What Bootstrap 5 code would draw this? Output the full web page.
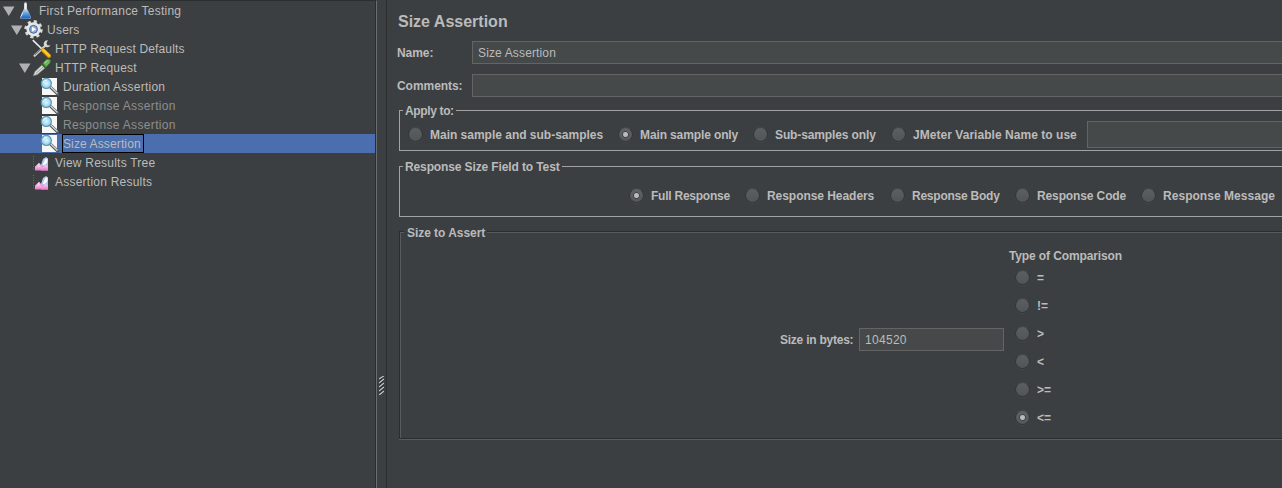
<!DOCTYPE html>
<html lang="en">
<head>
<meta charset="utf-8">
<title>Size Assertion</title>
<link href="https://cdn.jsdelivr.net/npm/bootstrap@5.3.0/dist/css/bootstrap.min.css" rel="stylesheet">
<script src="https://cdn.jsdelivr.net/npm/bootstrap@5.3.0/dist/js/bootstrap.bundle.min.js"></script>
<style>
body{background:#3c3f41;color:#bbb;font:12px/15px "Liberation Sans",Arial,sans-serif;height:488px;white-space:nowrap}
.tree-pane{width:377px;border-top:1px solid #2b2d2e;border-right:1px solid #6b6e70;box-shadow:inset -1px 0 #2b2d2e;letter-spacing:.23px}
.tree-row{height:19px;padding-left:2px}
.lv1{padding-left:10px}.lv2{padding-left:18px}.lv3{padding-left:26px}
.tw{width:14px;height:19px}
.ic{width:20px;height:19px;overflow:visible}
.tree-label{margin-left:2px;height:19px;line-height:19px;border:1px solid transparent;padding-right:2px}
.off{color:#8e8e8e;letter-spacing:.34px}
.chosen{background:#4b6eaf;margin-right:1px;letter-spacing:.12px}
.chosen .tree-label{border-color:#000}
.divider{width:10px;border-right:1px solid #2b2d2e;padding:376px 0 0 2px}
.editor{font-weight:700;padding-left:10px;letter-spacing:-.05px}
.editor h1{font-size:16px;line-height:20px;font-weight:700;margin:12px 0 9px 1px;letter-spacing:0}
.line-row{height:23px;margin-right:-10px}
.line-row>label{width:75px;padding-top:2px}
.field{background:#45494a;border:1px solid #646464;border-radius:0;color:#bbb;font:12px/15px "Liberation Sans",Arial,sans-serif;letter-spacing:.14px;height:23px;padding:0 5px;outline:0}
.group{border:1px solid #a0a2a3;margin:0 -10px 0 2px;padding:0;min-width:0}
.group>legend{float:none;width:auto;font-size:12px;line-height:17px;height:15px;font-weight:700;margin:0 0 0 3px;padding:0 2px}
.g1{height:48px;margin-top:6px}
.g2{height:58px;margin-top:8px}
.g3{height:215px;margin-top:7px;border-color:#2b2d2e;box-shadow:inset 1px 1px #585b5d,0 1px #585b5d}
.g3>legend{margin-left:4px;padding:0 2px 0 3px;line-height:19px;background:#3c3f41}
.opts1{display:grid;grid-template-columns:210px 135px 138px 196px 300px;padding-left:8px;height:32px}
.opts1 .radio-item{margin-top:2px}
.opts2{display:grid;grid-template-columns:116px 145px 125px 126px 140px;padding-left:229px;margin-top:14px}
.radio-item{display:flex;align-items:center;height:16px}
.radio-item input{appearance:none;width:15px;height:15px;margin:0 7px 1px 0;border-radius:50%;flex:none;border:1px solid #35383a;border-top-color:#45484a;background:linear-gradient(#5c5f61,#525557);box-shadow:0 1px 0 #45484a}
.radio-item input:checked{background:radial-gradient(circle at 50% 50%,#bbb 0 2px,#404345 3px,transparent 3.5px),linear-gradient(#5f6264,#55585a)}
.tight1{letter-spacing:-.12px!important}
.tight2{letter-spacing:-.24px!important}
.tight3{letter-spacing:-.36px!important}
.loose{letter-spacing:.04px}
.size-label{margin:94px 6px 0 380px;width:73px}
.size-field{width:145px;margin-top:89px}
.cmp{margin-left:5px;padding-top:10px}
.cmp .radio-item{margin:0 0 12px 6px}
.cmp .radio-item:first-of-type{margin-top:6px}
</style>
</head>
<body class="d-flex overflow-hidden m-0">
<svg class="position-absolute" width="0" height="0">
  <defs>
    <linearGradient id="blue" x2="0" y2="1"><stop stop-color="#7db8ef"/><stop offset="1" stop-color="#125fc4"/></linearGradient>
    <linearGradient id="pink" x2="0" y2="1"><stop stop-color="#fff"/><stop offset="1" stop-color="#eb72c8"/></linearGradient>
    <radialGradient id="lens"><stop stop-color="#e2f8ff"/><stop offset="1" stop-color="#83c9ea"/></radialGradient>
  </defs>
  <symbol id="arrow" viewBox="0 0 14 19"><path d="M1 5.5h11.5L6.8 15z" fill="#afb0b1"/></symbol>
  <symbol id="flask" viewBox="0 0 20 19"><path d="M8 2.5v5L4 16.5q0 1.3 2 1.3h7.5q1.8 0 1.5-1.5L11 7.5v-5z" fill="#d8e6f2" fill-opacity=".8"/><path d="M8.5 1.5h2v7h-2z" fill="#eef3f7"/><path d="M6.7 10.5h5.8l2.2 5.6q.2 1.5-2 1.5H6.5q-2.2 0-1.8-1.5z" fill="url(#blue)"/><path d="M6.7 11.5l-1.5 4" stroke="#d5edff"/></symbol>
  <symbol id="gear" viewBox="0 0 20 19"><circle cx="9.5" cy="9.3" r="7.7" fill="none" stroke="#d9d9d9" stroke-width="3" stroke-dasharray="3.1 2.95"/><circle cx="9.5" cy="9.3" r="5.8" fill="#bfd2ea" stroke="#e8e8e8" stroke-width="2.6"/><circle cx="9.5" cy="9.3" r="3.9" fill="#8fb0dc" stroke="#4a6a9c"/><path d="M8 6.8v5l4-2.5z" fill="#fff"/></symbol>
  <symbol id="tools" viewBox="0 0 20 19"><path d="M3 17L14 6.5" stroke="#333" stroke-width="3.4"/><path d="M2.7 16.7L14 6" stroke="#c8cac9" stroke-width="2.4" stroke-linecap="round"/><path d="M15.8 1.2a3.5 3.5 0 1 0 2.6 5l-2.8.2-1.2-1.8z" fill="#d6d8d7"/><path d="M3 15.8L9 10" stroke="#555" stroke-width=".8"/><path d="M.8 1.2L11 11" stroke="#eee" stroke-width="1.6"/><path d="M11 11.2l6 5.8" stroke="#c98700" stroke-width="4" stroke-linecap="round"/><path d="M11 10.8l6 5.7" stroke="#ffc622" stroke-width="2.6" stroke-linecap="round"/></symbol>
  <symbol id="dropper" viewBox="0 0 20 19"><path d="M1.3 17.7L3 13.5 11 6l3 3-8.5 7.5z" fill="#dedfdd" stroke="#858785" stroke-width=".7"/><path d="M4 15.5l7.5-7" stroke="#8f9290" stroke-width="1"/><path d="M9.3 5.3l4.8 5" stroke="#2f6b27" stroke-width="2"/><path d="M11 5l3.5-3.4q2.5-1.2 3.6.7.6 1.5-.5 3L14 9z" fill="#70b45a" stroke="#3f8434" stroke-width=".7"/><path d="M12.5 5.2l3-2.7" stroke="#b4dfa1"/></symbol>
  <symbol id="glass" viewBox="0 0 20 19"><path d="M2 1h15v17H2z" fill="#f7f7f6"/><path d="M10.8 10.5l7 6.7" stroke="#55585a" stroke-width="3" stroke-linecap="round"/><path d="M10.5 9.8l7 6.8" stroke="#d0d2d3" stroke-width="1.4"/><circle cx="6.3" cy="6.4" r="5.1" fill="url(#lens)" stroke="#5f93ae" stroke-width="1.1"/><path d="M3.2 5.7q1-2.5 3.5-2.4" stroke="#fff" fill="none"/></symbol>
  <symbol id="chart" viewBox="0 0 20 19"><path d="M1.5 3v15" stroke="#686b6d" stroke-dasharray="1 1.5"/><path d="M9 12l2-6 3-2 2 1.5v12H9z" fill="#a9c9ef"/><path d="M11 11l2.5-5 1.8-.5V9L12 14z" fill="#fff"/><path d="M3 17.5v-3.7L7 9.8l3.5 4.2 3-2.2L16 14v3.5z" fill="url(#pink)"/><path d="M3.5 13.7L7 10.2l3 4 3.5-2.6" stroke="#de82cb" fill="none" stroke-width=".8"/></symbol>
</svg>

<aside class="tree-pane flex-shrink-0">
  <div class="tree-row lv0 d-flex"><svg class="tw"><use href="#arrow"/></svg><svg class="ic"><use href="#flask"/></svg><span class="tree-label">First Performance Testing</span></div>
  <div class="tree-row lv1 d-flex"><svg class="tw"><use href="#arrow"/></svg><svg class="ic"><use href="#gear"/></svg><span class="tree-label">Users</span></div>
  <div class="tree-row lv2 d-flex"><span class="tw"></span><svg class="ic"><use href="#tools"/></svg><span class="tree-label" style="letter-spacing:.15px">HTTP Request Defaults</span></div>
  <div class="tree-row lv2 d-flex"><svg class="tw"><use href="#arrow"/></svg><svg class="ic"><use href="#dropper"/></svg><span class="tree-label">HTTP Request</span></div>
  <div class="tree-row lv3 d-flex"><span class="tw"></span><svg class="ic"><use href="#glass"/></svg><span class="tree-label">Duration Assertion</span></div>
  <div class="tree-row lv3 d-flex off"><span class="tw"></span><svg class="ic"><use href="#glass"/></svg><span class="tree-label">Response Assertion</span></div>
  <div class="tree-row lv3 d-flex off"><span class="tw"></span><svg class="ic"><use href="#glass"/></svg><span class="tree-label">Response Assertion</span></div>
  <div class="tree-row lv3 d-flex chosen"><span class="tw"></span><svg class="ic"><use href="#glass"/></svg><span class="tree-label">Size Assertion</span></div>
  <div class="tree-row lv2 d-flex"><span class="tw"></span><svg class="ic"><use href="#chart"/></svg><span class="tree-label">View Results Tree</span></div>
  <div class="tree-row lv2 d-flex"><span class="tw"></span><svg class="ic"><use href="#chart"/></svg><span class="tree-label">Assertion Results</span></div>
</aside>

<div class="divider flex-shrink-0"><svg class="d-block" width="5" height="19"><path d="M0 3l5-3M0 7l5-4M0 11l5-4M0 15l5-4M0 19l5-4" stroke="#c4c5c6" stroke-width="1.3"/><path d="M0 5l5-4M0 9l5-4M0 13l5-4M0 17l5-4" stroke="#242628" stroke-width=".8"/></svg></div>

<main class="editor flex-grow-1 overflow-hidden">
  <h1>Size Assertion</h1>
  <div class="line-row d-flex align-items-center"><label for="nm">Name:</label><input id="nm" class="field flex-grow-1" value="Size Assertion"></div>
  <div class="line-row d-flex align-items-center" style="margin-top:10px"><label for="cm">Comments:</label><input id="cm" class="field flex-grow-1"></div>

  <fieldset class="group g1">
    <legend class="tight3">Apply to:</legend>
    <div class="opts1 align-items-center">
      <label class="radio-item" style="letter-spacing:-.01px"><input type="radio" name="a">Main sample and sub-samples</label>
      <label class="radio-item tight1"><input type="radio" name="a" checked>Main sample only</label>
      <label class="radio-item tight1"><input type="radio" name="a">Sub-samples only</label>
      <label class="radio-item loose"><input type="radio" name="a">JMeter Variable Name to use</label>
      <input class="field" style="height:27px">
    </div>
  </fieldset>

  <fieldset class="group g2">
    <legend class="tight1">Response Size Field to Test</legend>
    <div class="opts2">
      <label class="radio-item tight2"><input type="radio" name="b" checked>Full Response</label>
      <label class="radio-item"><input type="radio" name="b">Response Headers</label>
      <label class="radio-item tight2"><input type="radio" name="b">Response Body</label>
      <label class="radio-item tight1"><input type="radio" name="b">Response Code</label>
      <label class="radio-item loose"><input type="radio" name="b">Response Message</label>
    </div>
  </fieldset>

  <fieldset class="group g3">
    <legend>Size to Assert</legend>
    <div class="d-flex align-items-start">
      <label class="size-label tight2" for="sz">Size in bytes:</label>
      <input id="sz" class="field size-field" style="letter-spacing:.3px" value="104520">
      <div class="cmp">
        <div class="tight1">Type of Comparison</div>
        <label class="radio-item"><input type="radio" name="c">=</label>
        <label class="radio-item"><input type="radio" name="c">!=</label>
        <label class="radio-item"><input type="radio" name="c">&gt;</label>
        <label class="radio-item"><input type="radio" name="c">&lt;</label>
        <label class="radio-item"><input type="radio" name="c">&gt;=</label>
        <label class="radio-item"><input type="radio" name="c" checked>&lt;=</label>
      </div>
    </div>
  </fieldset>
</main>
</body>
</html>
